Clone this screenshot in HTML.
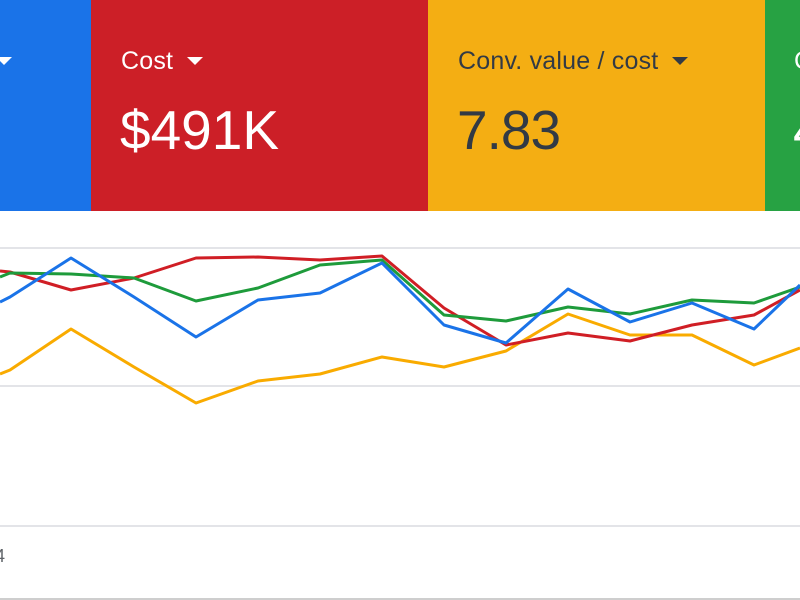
<!DOCTYPE html>
<html><head><style>
body{margin:0;width:800px;height:600px;overflow:hidden;background:#fff;font-family:"Liberation Sans",sans-serif;position:relative}
.c{position:absolute;top:0;height:211px}
.t{position:absolute;top:47px;font-size:25px;letter-spacing:0.2px}
.v{position:absolute;top:98px;font-size:55px}
.arr{display:inline-block;width:0;height:0;border-left:8px solid transparent;border-right:8px solid transparent;border-top:8px solid currentColor;vertical-align:middle;margin-left:14px;margin-top:-3px}
</style></head><body>
<div class="c" style="left:0;width:91px;background:#1a73e8"><span style="position:absolute;left:-4px;top:57px;border-left:8px solid transparent;border-right:8px solid transparent;border-top:8px solid #fff"></span></div>
<div class="c" style="left:91px;width:337px;background:#cc1f27;color:#fff">
<div class="t" style="left:30px">Cost<span class="arr"></span></div>
<div class="v" style="left:29px">$491K</div></div>
<div class="c" style="left:428px;width:337px;background:#f4ae13;color:#323a45">
<div class="t" style="left:30px">Conv. value / cost<span class="arr"></span></div>
<div class="v" style="left:29px;letter-spacing:-1px">7.83</div></div>
<div class="c" style="left:765px;width:35px;background:#27a243;color:#fff;overflow:hidden">
<div class="t" style="left:29px">Conv</div>
<div class="v" style="left:28px">4</div></div>
<svg width="800" height="600" style="position:absolute;left:0;top:0">
<g stroke="#dadce0" stroke-width="1.5"><line x1="0" y1="248" x2="800" y2="248"/><line x1="0" y1="386" x2="800" y2="386"/><line x1="0" y1="526" x2="800" y2="526"/></g>
<line x1="0" y1="599" x2="800" y2="599" stroke="#bdbdbd" stroke-width="1.5"/>
<g fill="none" stroke-width="3" stroke-linejoin="round">
<polyline stroke="#f9ab00" points="0,374 10,370 71,329 134,367 196,403 258,381 320,374 382,357 444,367 506,351 568,314 630,335 692,335 754,365 800,348"/>
<polyline stroke="#d01e25" points="0,271 10,272 71,290 134,278 196,258 258,257 320,260 382,256 444,308 506,345 568,333 630,341 692,325 754,315 800,290"/>
<polyline stroke="#1e9b3b" points="0,277 10,273 71,274 134,278 196,301 258,288 320,265 382,260 444,315 506,321 568,307 630,314 692,300 754,303 800,287"/>
<polyline stroke="#1a73e8" points="0,302 10,297 71,258 134,297 196,337 258,300 320,293 382,263 444,325 506,343 568,289 630,322 692,303 754,329 800,285"/>
</g>
<text x="-5" y="562" font-family="Liberation Sans,sans-serif" font-size="18" fill="#5f6368">4</text>
</svg>
</body></html>
